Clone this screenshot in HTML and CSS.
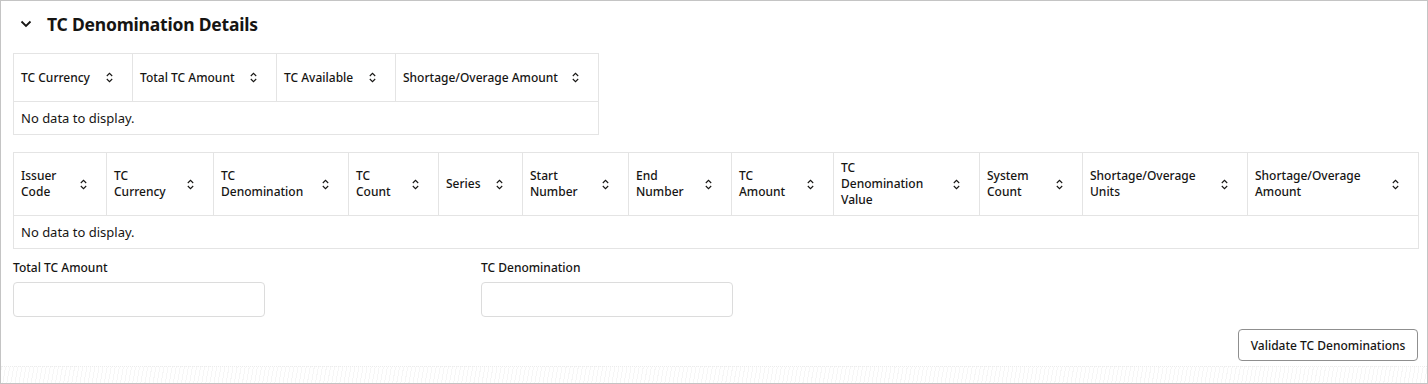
FILE: index.html
```html
<!DOCTYPE html>
<html lang="en">
<head>
<meta charset="utf-8">
<title>TC Denomination Details</title>
<link rel="stylesheet" href="styles.css">
</head>
<body>

<div class="frame">

<div class="section_title">
	<svg class="chevron" width="12" height="8" viewBox="0 0 12 8"><path d="M1.5 1.5 L6 6 L10.5 1.5" fill="none" stroke="#161513" stroke-width="1.8"/></svg>
	<h2>TC Denomination Details</h2>
</div>

<div class="grid summary_grid">
	<div class="head"><span>TC Currency</span><i class="sort"></i></div>
	<div class="head"><span>Total TC Amount</span><i class="sort"></i></div>
	<div class="head"><span>TC Available</span><i class="sort"></i></div>
	<div class="head"><span>Shortage/Overage Amount</span><i class="sort"></i></div>
	<div class="empty">No data to display.</div>
</div>

<div class="grid detail_grid">
	<div class="head"><span>Issuer<br>Code</span><i class="sort"></i></div>
	<div class="head"><span>TC<br>Currency</span><i class="sort"></i></div>
	<div class="head"><span>TC<br>Denomination</span><i class="sort"></i></div>
	<div class="head"><span>TC<br>Count</span><i class="sort"></i></div>
	<div class="head"><span>Series</span><i class="sort"></i></div>
	<div class="head"><span>Start<br>Number</span><i class="sort"></i></div>
	<div class="head"><span>End<br>Number</span><i class="sort"></i></div>
	<div class="head"><span>TC<br>Amount</span><i class="sort"></i></div>
	<div class="head"><span>TC<br>Denomination<br>Value</span><i class="sort"></i></div>
	<div class="head"><span>System<br>Count</span><i class="sort"></i></div>
	<div class="head"><span>Shortage/Overage<br>Units</span><i class="sort"></i></div>
	<div class="head"><span>Shortage/Overage<br>Amount</span><i class="sort"></i></div>
	<div class="empty">No data to display.</div>
</div>

<div class="fields">
	<label class="field">
		<span class="field_label">Total TC Amount</span>
		<input type="text" class="field_input">
	</label>
	<label class="field">
		<span class="field_label">TC Denomination</span>
		<input type="text" class="field_input">
	</label>
</div>

<div class="actions">
	<button class="validate_button">Validate TC Denominations</button>
</div>

<div class="footer_band"></div>

</div>

</body>
</html>
```

FILE: styles.css
```css
html, body {
margin: 0;
padding: 0;
background: #ffffff;
}

body {
font: 12px "Noto Sans", "Open Sans", sans-serif;
color: #161513;
}

.frame {
box-sizing: border-box;
width: 1428px;
height: 384px;
border: 1px solid #c4c4c4;
padding: 0 0 0 12px;
position: relative;
overflow: hidden;
}


/* title */


.section_title {
display: flex;
align-items: center;
height: 46px;
}

.chevron {
margin-left: 7px;
margin-right: 15px;
}

.section_title h2 {
margin: 0;
font-size: 17.5px;
font-weight: 700;
letter-spacing: -0.2px;
}


/* grids */


.grid {
display: grid;
box-sizing: border-box;
border: 1px solid #e4e4e4;
border-right: 0;
margin-top: 6px;
}

.summary_grid {
grid-template-columns: 119px 144px 119px 203px;
width: 586px;
}

.detail_grid {
grid-template-columns: 93px 107px 135px 90px 84px 106px 103px 102px 146px 103px 165px 171px;
width: 1406px;
margin-top: 17px;
}

.head {
display: flex;
align-items: center;
box-sizing: border-box;
border-right: 1px solid #e4e4e4;
border-bottom: 1px solid #e4e4e4;
padding: 0 19px 0 7px;
line-height: 16px;
font-weight: 500;
}

.summary_grid .head {
height: 48px;
}

.detail_grid .head {
height: 63px;
}

.head span {
flex: 1;
}

/* up/down sort glyph */
.sort {
display: block;
width: 7px;
height: 11px;
background:
	url("data:image/svg+xml,%3Csvg xmlns='http://www.w3.org/2000/svg' width='7' height='11'%3E%3Cpath d='M0.8 4 L3.5 1.3 L6.2 4 M0.8 7 L3.5 9.7 L6.2 7' fill='none' stroke='%23161513' stroke-width='1.1'/%3E%3C/svg%3E") no-repeat;
}

.empty {
grid-column: 1 / -1;
border-right: 1px solid #e4e4e4;
height: 32px;
line-height: 32px;
padding-left: 7px;
font-size: 13px;
}


/* form fields */


.fields {
display: flex;
gap: 216px;
margin-top: 11px;
}

.field {
display: flex;
flex-direction: column;
width: 252px;
}

.field_label {
font-weight: 500;
line-height: 16px;
}

.field_input {
box-sizing: border-box;
height: 35px;
margin-top: 6px;
border: 1px solid #dcdcdc;
border-radius: 4px;
font: inherit;
}


/* button */


.actions {
display: flex;
justify-content: flex-end;
padding-right: 9px;
margin-top: 12px;
}

.validate_button {
box-sizing: border-box;
width: 180px;
height: 32px;
border: 1px solid #8f8f8f;
border-radius: 4px;
background: #ffffff;
font: 500 12px "Noto Sans", "Open Sans", sans-serif;
color: #161513;
}


/* faint decorative band at the bottom */
.footer_band {
position: absolute;
left: 0;
right: 0;
bottom: 0;
height: 16px;
border-top: 1px dotted #ececec;
background: repeating-linear-gradient(100deg, rgba(0, 0, 0, 0.035) 0 1px, transparent 1px 4px);
}
```
